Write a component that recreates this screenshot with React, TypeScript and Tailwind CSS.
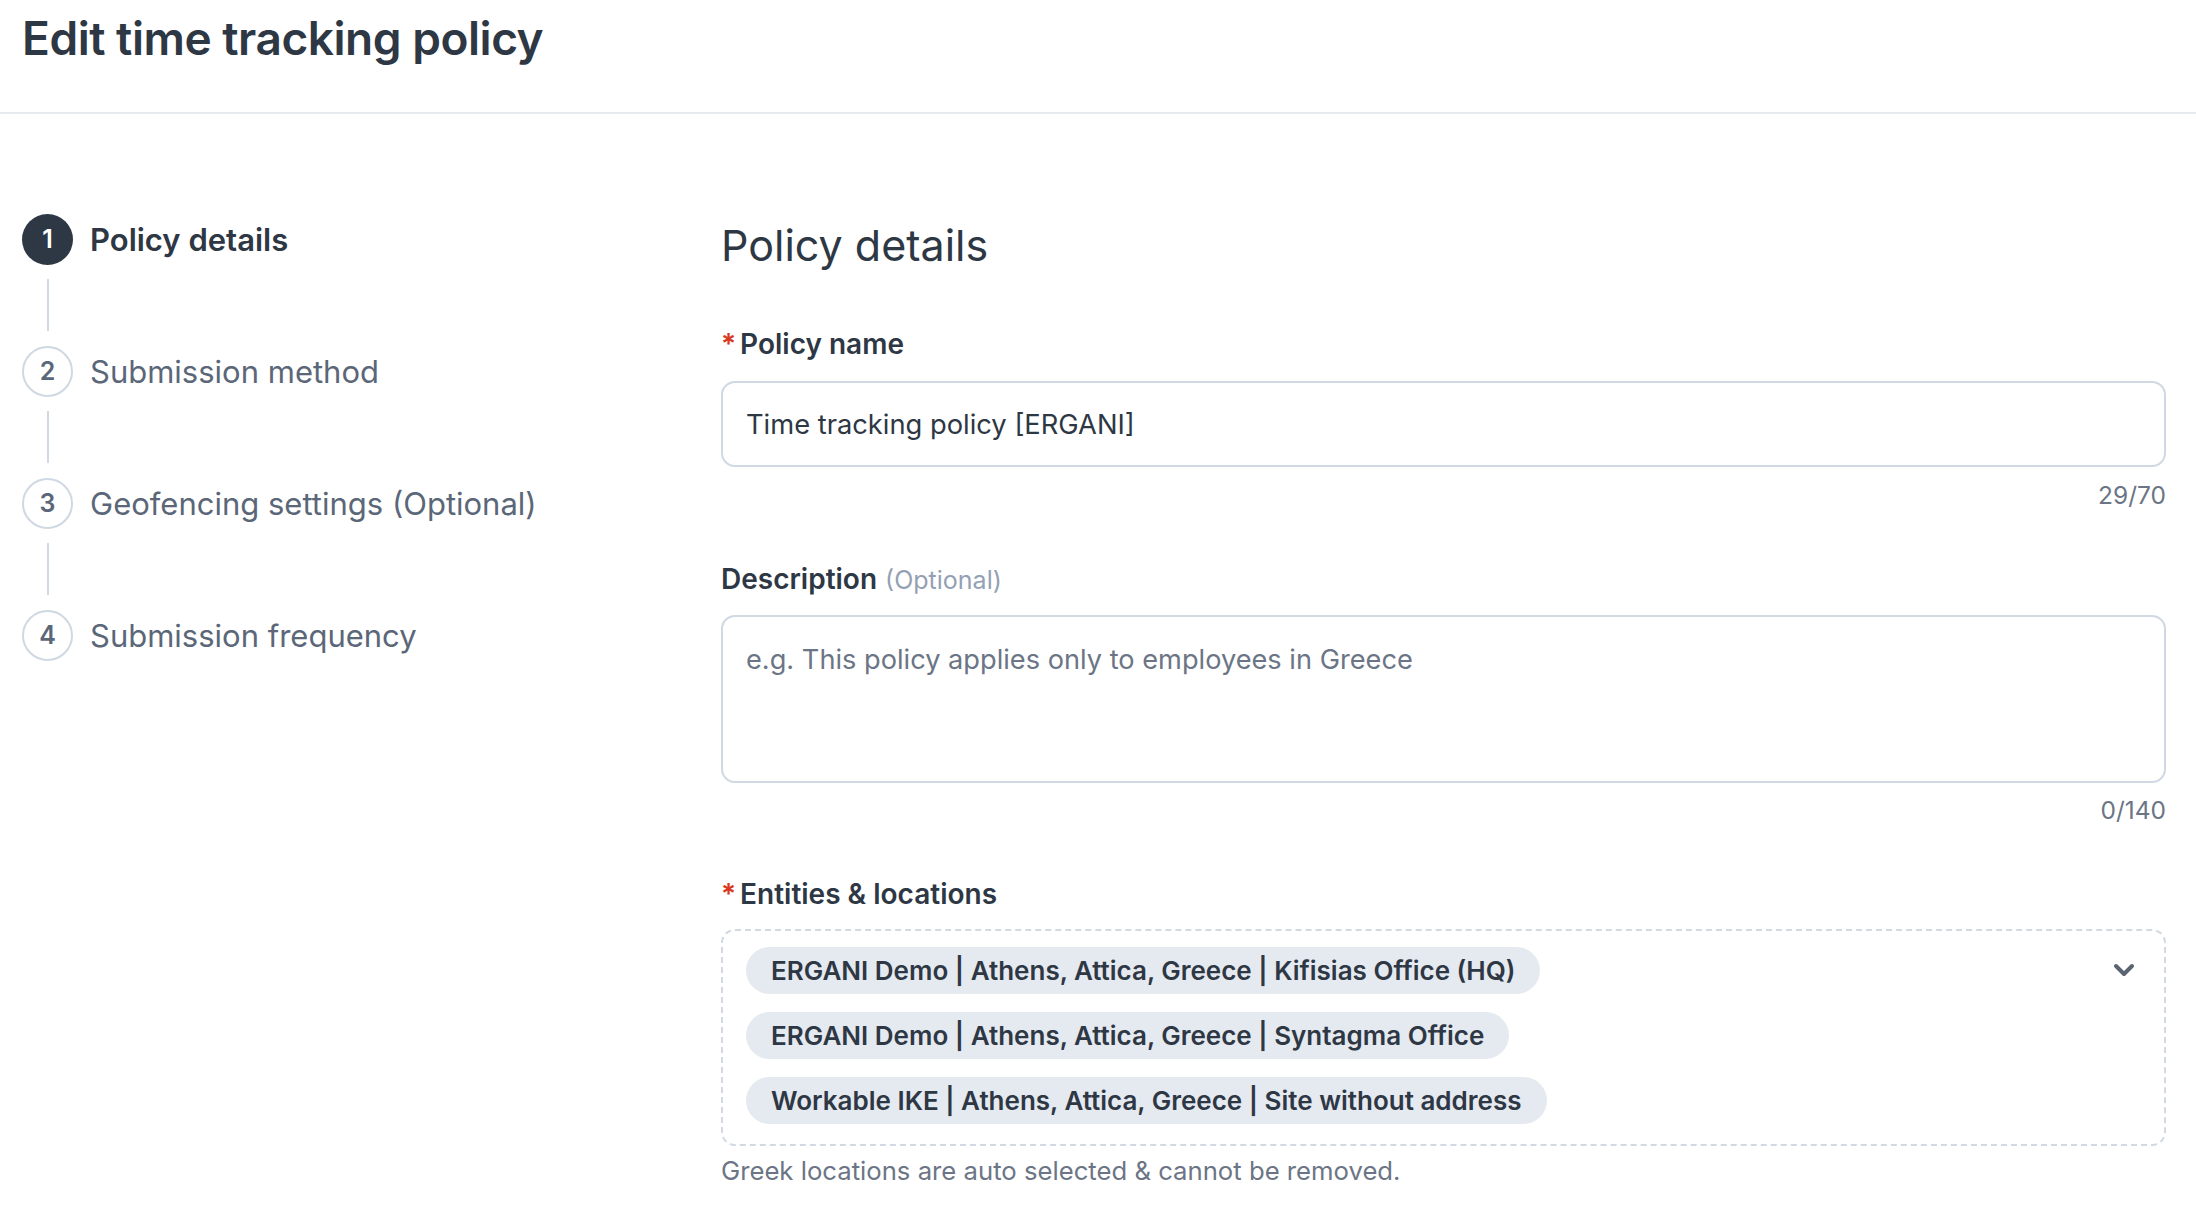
import { ChevronDown } from 'lucide-react'

const steps = [
  { n: 1, label: 'Policy details', active: true },
  { n: 2, label: 'Submission method', active: false },
  { n: 3, label: 'Geofencing settings (Optional)', active: false },
  { n: 4, label: 'Submission frequency', active: false },
]

const locations = [
  'ERGANI Demo | Athens, Attica, Greece | Kifisias Office (HQ)',
  'ERGANI Demo | Athens, Attica, Greece | Syntagma Office',
  'Workable IKE | Athens, Attica, Greece | Site without address',
]

function Stepper() {
  return (
    <div className="flex flex-col">
      {steps.map((s, i) => (
        <div key={s.n} className="flex flex-col">
          <div className="flex items-center gap-[17px]">
            <div
              className={`w-[51px] h-[51px] rounded-full flex items-center justify-center text-[25px] font-semibold shrink-0 ${
                s.active ? 'bg-[#2e3744] text-white' : 'border-2 border-[#cfd8e3] text-[#5b6778] bg-white'
              }`}
            >
              {s.n}
            </div>
            <span
              className={`text-[31px] leading-[36px] ${
                s.active ? 'font-semibold text-[#2e3744]' : 'text-[#5b6778]'
              }`}
            >
              {s.label}
            </span>
          </div>
          {i < steps.length - 1 && (
            <div className="w-[51px] flex justify-center pt-[14px] pb-[15px]">
              <div className="w-[2px] h-[52px] bg-[#cfd8e3]" />
            </div>
          )}
        </div>
      ))}
    </div>
  )
}

function Label({ children, required }: { children: React.ReactNode; required?: boolean }) {
  return (
    <div className="flex items-baseline text-[28px] leading-[34px] font-semibold text-[#2e3744]">
      {required && <span className="text-[#d9381e] text-[28px] leading-[28px] mr-[4px]">*</span>}
      {children}
    </div>
  )
}

export default function App() {
  return (
    <div className="min-h-screen bg-white font-['Inter','Noto_Sans',sans-serif] text-[#2e3744]">
      <div className="h-[114px] border-b-2 border-[#e6eaf0] px-[22px] pt-[10px]">
        <h1 className="text-[46px] leading-[56px] font-semibold tracking-[-0.01em] text-[#2e3744]">
          Edit time tracking policy
        </h1>
      </div>

      <div className="flex pt-[100px] pl-[22px] pr-[30px]">
        <div className="w-[699px] shrink-0">
          <Stepper />
        </div>

        <div className="flex-1 flex flex-col pt-[6px]">
          <h2 className="text-[43px] leading-[50px] text-[#2e3744]">Policy details</h2>

          <div className="mt-[57px]">
            <Label required>Policy name</Label>
            <div className="mt-[20px] h-[86px] rounded-[14px] border-2 border-[#cfd8e3] px-[23px] pt-[3px] flex items-center text-[27.3px] text-[#2e3744]">
              Time tracking policy [ERGANI]
            </div>
            <div className="mt-[13px] text-right text-[24.5px] leading-[30px] text-[#6b7585]">29/70</div>
          </div>

          <div className="mt-[52px]">
            <div className="flex items-baseline gap-[8px]">
              <span className="text-[28px] leading-[34px] font-semibold text-[#2e3744]">Description</span>
              <span className="text-[25px] text-[#94a0b3]">(Optional)</span>
            </div>
            <div className="mt-[15px] h-[168px] rounded-[14px] border-2 border-[#cfd8e3] px-[23px] pt-[26px] text-[27.2px] leading-[34px] text-[#6b7585]">
              e.g. This policy applies only to employees in Greece
            </div>
            <div className="mt-[12px] text-right text-[24.5px] leading-[30px] text-[#6b7585]">0/140</div>
          </div>

          <div className="mt-[52px]">
            <Label required>Entities &amp; locations</Label>
            <div className="mt-[18px] rounded-[14px] border-2 border-dashed border-[#d2d9e3] pl-[23px] pr-[24px] pt-[16px] pb-[20px] flex items-start">
              <div className="flex-1 flex flex-col items-start gap-[18px]">
                {locations.map(l => (
                  <div
                    key={l}
                    className="h-[47px] rounded-full bg-[#e5e9f0] px-[25px] flex items-center text-[26px] font-semibold text-[#2e3744]"
                  >
                    {l}
                  </div>
                ))}
              </div>
              <div className="h-[47px] flex items-center">
                <ChevronDown className="w-[32px] h-[32px] text-[#5b6472]" strokeWidth={3} />
              </div>
            </div>
            <div className="mt-[10px] text-[25.7px] leading-[30px] text-[#6b7585]">
              Greek locations are auto selected &amp; cannot be removed.
            </div>
          </div>
        </div>
      </div>
    </div>
  )
}
